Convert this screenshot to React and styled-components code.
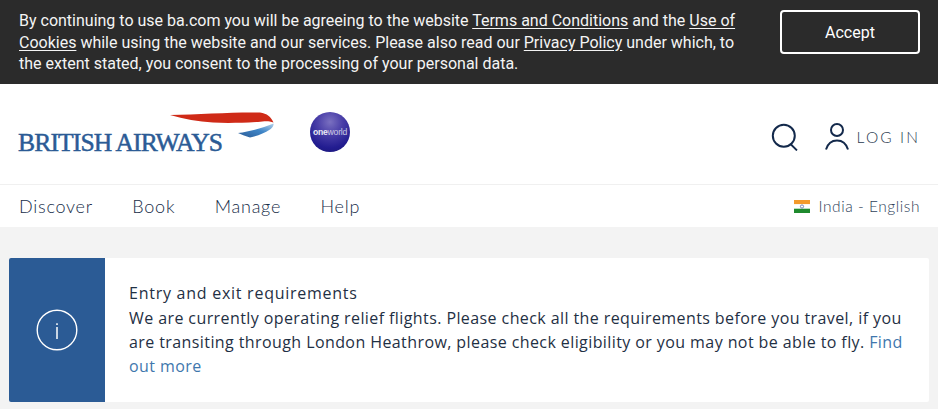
import React from "react";
import styled, { createGlobalStyle } from "styled-components";

const Global = createGlobalStyle`
  html, body { margin: 0; padding: 0; background: #f3f3f3; }
  * { box-sizing: border-box; }
  body { width: 938px; height: 409px; overflow: hidden; font-family: "Open Sans", sans-serif; }
`;

const CookieBar = styled.section`
  height: 84px;
  background: #2b2b2b;
  color: #f4f4f4;
  display: flex;
  justify-content: space-between;
  padding: 10px 18px 0 19px;
`;
const CookieText = styled.p`
  margin: 0;
  width: 730px;
  font: 400 16px/21.6px Roboto, sans-serif;
  a { color: inherit; text-decoration: underline; text-underline-offset: 2px; }
`;
const AcceptButton = styled.button`
  width: 140px;
  height: 44px;
  background: transparent;
  color: #fff;
  border: 2px solid #fff;
  border-radius: 4px;
  font: 400 16px Roboto, sans-serif;
`;

const Masthead = styled.header`
  height: 101px;
  background: #fff;
  display: flex;
  align-items: flex-start;
  justify-content: space-between;
  padding: 28px 18px 0 18px;
  border-bottom: 1px solid #f0f0f0;
`;
const Brand = styled.div`
  display: flex;
  align-items: flex-start;
`;
const Logo = styled.div`
  position: relative;
  width: 292px;
  height: 50px;
`;
const Wordmark = styled.span`
  position: absolute;
  left: 0;
  top: 17px;
  color: #2b5b95;
  font: 400 25.6px/28px "Liberation Serif", serif;
  -webkit-text-stroke: 0.5px #2b5b95;
  letter-spacing: -0.88px;
  white-space: nowrap;
`;
const Ribbon = styled.svg`
  position: absolute;
  left: 132px;
  top: 0;
`;
const Globe = styled.div`
  width: 40px;
  height: 40px;
  border-radius: 50%;
  background: radial-gradient(circle at 50% 25%, #7a70c0 0%, #4a3fa8 35%, #221c90 72%, #1a1772 100%);
  color: #e9e9f5;
  font: 700 8.6px/40px "Liberation Sans", sans-serif;
  letter-spacing: -0.2px;
  text-align: center;
  span { font-weight: 400; opacity: 0.8; }
`;
const Tools = styled.div`
  display: flex;
  align-items: center;
  margin-top: 11px;
`;
const LoginLabel = styled.span`
  margin-left: 8px;
  color: #2a3a50;
  font: 300 15.5px/24px Lato, sans-serif;
  letter-spacing: 2.1px;
`;
const ToolIcon = styled.svg`
  display: block;
  margin-right: ${p => p.$gap || 0}px;
`;

const NavBar = styled.nav`
  height: 42px;
  background: #fff;
  display: flex;
  align-items: center;
  justify-content: space-between;
  padding: 0 18px 0 19px;
`;
const NavLinks = styled.div`
  display: flex;
  gap: 39.5px;
`;
const NavLink = styled.a`
  color: #162c48;
  font: 300 18px/24px Lato, sans-serif;
  letter-spacing: 0.75px;
`;
const Locale = styled.div`
  display: flex;
  align-items: center;
  gap: 9px;
  color: #2f4159;
  font: 300 15.5px/20px Lato, sans-serif;
  letter-spacing: 0.55px;
`;
const Flag = styled.svg`
  display: block;
`;

const Main = styled.main`
  padding: 31px 9px 0 9px;
`;
const Notice = styled.article`
  height: 144px;
  display: flex;
  background: #fff;
  border-radius: 2px;
  overflow: hidden;
`;
const NoticeIcon = styled.div`
  width: 96px;
  flex: none;
  background: #2b5b95;
  display: flex;
  align-items: center;
  justify-content: center;
`;
const NoticeBody = styled.div`
  padding: 23px 20px 0 24px;
  color: #1f3044;
  font: 400 16px/24px "Open Sans", sans-serif;
  letter-spacing: 0.41px;
  a { color: #3f77ad; }
`;
const NoticeTitle = styled.div`
  margin-bottom: 1px;
  letter-spacing: 0.74px;
`;

export default function App() {
  return (
    <>
      <Global />
      <CookieBar>
        <CookieText>
          By continuing to use ba.com you will be agreeing to the website <a>Terms and Conditions</a> and the <a>Use of Cookies</a> while using the website and our services. Please also read our <a>Privacy Policy</a> under which, to the extent stated, you consent to the processing of your personal data.
        </CookieText>
        <AcceptButton>Accept</AcceptButton>
      </CookieBar>
      <Masthead>
        <Brand>
          <Logo>
            <Wordmark>BRITISH AIRWAYS</Wordmark>
            <Ribbon width="126" height="30" viewBox="0 0 126 30">
              <defs>
                <linearGradient id="sw" x1="0" y1="1" x2="1" y2="0">
                  <stop offset="0" stopColor="#2b5b95" />
                  <stop offset="0.55" stopColor="#3f86c8" />
                  <stop offset="1" stopColor="#b4d0e8" />
                </linearGradient>
              </defs>
              <path d="M20 3 C50 2.4 85 0 110 0.6 C117 1.5 121 5 123.5 10.5 C118 8.6 114 9.4 108 10 C92 11 76 11.4 63 10.6 C48 9.6 34 7 20 3 Z" fill="#cf2a17" />
              <path d="M88 21 C100 19.6 113 16 123.5 11.5 C124 13.5 122.5 15.6 120 17.6 C114 21.4 108 24 100 25.4 C96 24.6 92 22.6 88 21 Z" fill="url(#sw)" />
            </Ribbon>
          </Logo>
          <Globe>one<span>world</span></Globe>
        </Brand>
        <Tools>
          <ToolIcon $gap={26} width="28" height="28" viewBox="0 0 28 28" fill="none" stroke="#13294b" strokeWidth="2">
            <circle cx="12.8" cy="12.8" r="11" />
            <path d="M19.5 21 L26 27.5" strokeWidth="1.8" />
          </ToolIcon>
          <ToolIcon width="24" height="28" viewBox="0 0 24 28" fill="none" stroke="#13294b" strokeWidth="2">
            <circle cx="12" cy="7" r="6" />
            <path d="M1 26.5 C3 20 7 17.5 12 17.5 C17 17.5 21 20 23 26.5" />
          </ToolIcon>
          <LoginLabel>LOG IN</LoginLabel>
        </Tools>
      </Masthead>
      <NavBar>
        <NavLinks>
          <NavLink>Discover</NavLink>
          <NavLink>Book</NavLink>
          <NavLink>Manage</NavLink>
          <NavLink>Help</NavLink>
        </NavLinks>
        <Locale>
          <Flag width="16" height="13" viewBox="0 0 16 13">
            <rect width="16" height="4.3" fill="#f39a2b" />
            <rect y="4.3" width="16" height="4.4" fill="#fff" />
            <rect y="8.7" width="16" height="4.3" fill="#1f8a2e" />
            <circle cx="8" cy="6.5" r="1.6" fill="none" stroke="#5a6aa0" strokeWidth="0.8" />
          </Flag>
          India - English
        </Locale>
      </NavBar>
      <Main>
        <Notice>
          <NoticeIcon>
            <svg width="42" height="42" viewBox="0 0 42 42" fill="none" stroke="#fff" strokeWidth="1.4">
              <circle cx="21" cy="21" r="19.8" />
              <path d="M21 18 V30" strokeWidth="1.5" />
              <path d="M21 14.2 V16" strokeWidth="1.5" />
            </svg>
          </NoticeIcon>
          <NoticeBody>
            <NoticeTitle>Entry and exit requirements</NoticeTitle>
            We are currently operating relief flights. Please check all the requirements before you travel, if you are transiting through London Heathrow, please check eligibility or you may not be able to fly. <a>Find out more</a>
          </NoticeBody>
        </Notice>
      </Main>
    </>
  );
}
